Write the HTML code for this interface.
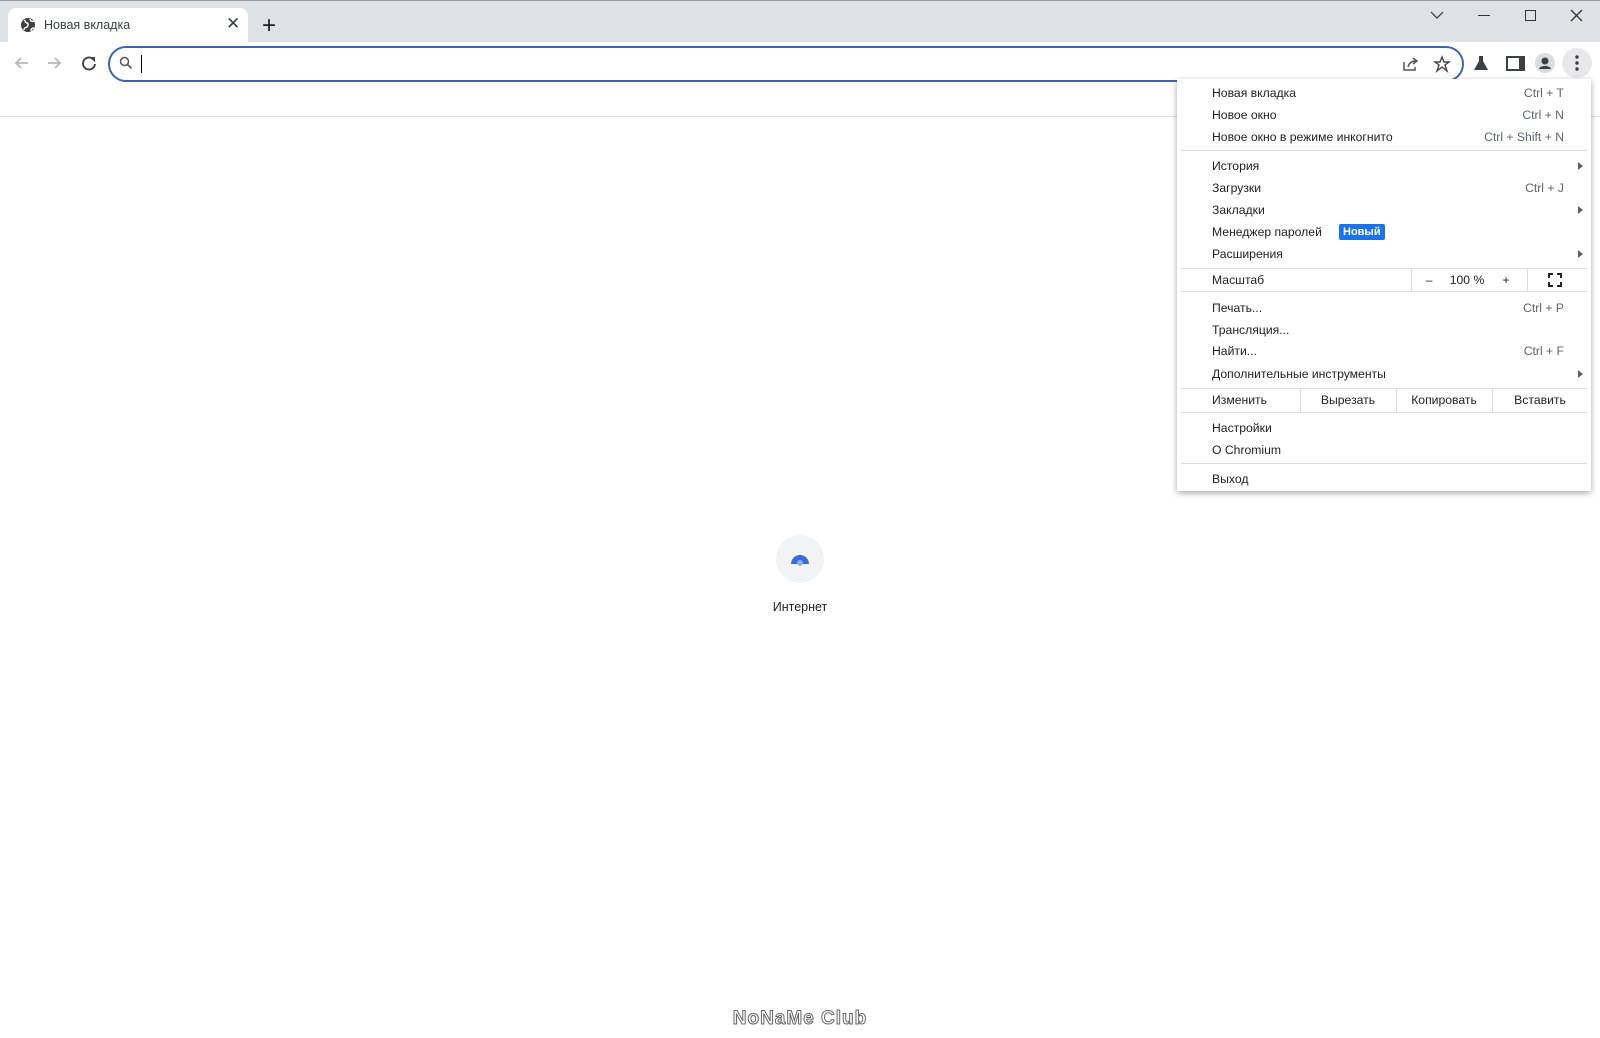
<!DOCTYPE html><html><head><meta charset="utf-8"><style>
body{margin:0;width:1600px;height:1038px;overflow:hidden;background:#fff;font-family:"Liberation Sans",sans-serif;position:relative}
.a{position:absolute}
.strip{left:0;top:0;width:1600px;height:42px;background:#dee1e6;border-top:1px solid #999;box-sizing:border-box}
.tab{left:8px;top:8px;width:240px;height:34px;background:#fff;border-radius:8px 8px 0 0;font-size:12.5px;color:#3c4043}
.tb{left:0;top:42px;width:1600px;height:74px;background:#fff;border-bottom:1px solid #dadce0}
.omni{left:108px;top:46px;width:1352px;height:32px;border:2px solid #3c65b0;border-radius:18px;background:#fff}
.menu{left:1177px;top:79px;width:414px;height:412px;background:#fff;box-shadow:0 2px 6px rgba(0,0,0,.35);font-size:12.2px;color:#202124}
.it{position:absolute;left:35px;transform:translateY(-50%)}
.sc{position:absolute;right:27px;transform:translateY(-50%);color:#5f6368}
.ar{position:absolute;right:8px;width:0;height:0;border-left:5px solid #5f6368;border-top:4px solid transparent;border-bottom:4px solid transparent;transform:translateY(-50%)}
.sep{position:absolute;left:4px;right:4px;height:1px;background:#dadce0}
.vs{position:absolute;width:1px;background:#dadce0}
.c{position:absolute;transform:translate(-50%,-50%)}
</style></head><body>
<div class="a strip"></div>
<div class="a tab"><svg class="a" style="left:12px;top:9px" width="16" height="16" viewBox="0 0 16 16"><circle cx="8" cy="8" r="7" fill="#3c4043"/><path d="M4 3c2 1 1 3 3 3s1 3 0 4-3 0-3 3M10 2c0 2 2 3 4 2M11 14c0-2 1-3 3-3" stroke="#fff" stroke-width="1.4" fill="none"/></svg><span class="a" style="left:36px;top:10px">Новая вкладка</span><span class="a" style="left:218px;top:6px;font-size:17px">✕</span></div>
<span class="a" style="left:262px;top:16px;font-size:24px;color:#202124;line-height:20px">+</span>
<svg class="a" style="left:1430px;top:10px" width="14" height="10"><path d="M1 2l6 6 6-6" stroke="#333" fill="none" stroke-width="1.2"/></svg>
<div class="a" style="left:1478px;top:15px;width:12px;height:1px;background:#333"></div>
<div class="a" style="left:1525px;top:10px;width:9px;height:9px;border:1.3px solid #333"></div>
<svg class="a" style="left:1570px;top:9px" width="13" height="13"><path d="M1 1l11 11M12 1L1 12" stroke="#333" stroke-width="1.3"/></svg>
<div class="a tb"></div>
<svg class="a" style="left:13px;top:55px" width="120" height="16" viewBox="0 0 120 16"><path d="M15 8H3M8 3L3 8l5 5" stroke="#b5b7ba" stroke-width="1.8" fill="none"/><path d="M35 8h12M42 3l5 5-5 5" stroke="#b5b7ba" stroke-width="1.8" fill="none"/><path d="M80 4a6 6 0 1 0 2 5" stroke="#444" stroke-width="1.9" fill="none"/><path d="M76 2h6v5" fill="#444"/></svg>
<div class="a omni"><svg class="a" style="left:9px;top:8px" width="14" height="14"><circle cx="5.5" cy="5.5" r="4" stroke="#555" stroke-width="1.5" fill="none"/><path d="M8.5 8.5l4 4" stroke="#555" stroke-width="1.6"/></svg><div class="a" style="left:31px;top:7px;width:1px;height:18px;background:#000"></div>
<svg class="a" style="left:1291px;top:7px" width="18" height="18"><path d="M3 7v8h11v-3M7 12c1-4 4-6 8-6M12 3l4 3-4 3" stroke="#555" stroke-width="1.5" fill="none"/></svg>
<svg class="a" style="left:1323px;top:7px" width="18" height="18"><path d="M9 2l2 5h5l-4 3 2 6-5-4-5 4 2-6-4-3h5z" stroke="#444" stroke-width="1.4" fill="none"/></svg></div>
<svg class="a" style="left:1472px;top:54px" width="18" height="18"><path d="M6 2h6M7 2v5l-5 9h14l-5-9V2z" fill="#3c4043"/></svg>
<div class="a" style="left:1506px;top:56px;width:11px;height:11px;border:2px solid #3c4043;border-right-width:6px"></div>
<div class="a" style="left:1535px;top:53px;width:20px;height:20px;border-radius:50%;background:#dadce0"><svg width="20" height="20"><circle cx="10" cy="8" r="3.5" fill="#3c4043"/><path d="M4 16c1-4 11-4 12 0z" fill="#3c4043"/></svg></div>
<div class="a" style="left:1562px;top:48px;width:30px;height:30px;border-radius:50%;background:#e8e8ea"><svg width="30" height="30"><circle cx="15" cy="9" r="1.7" fill="#3c4043"/><circle cx="15" cy="15" r="1.7" fill="#3c4043"/><circle cx="15" cy="21" r="1.7" fill="#3c4043"/></svg></div>
<div class="a menu">
<span class="it" style="top:14px">Новая вкладка</span><span class="sc" style="top:14px">Ctrl + T</span>
<span class="it" style="top:36px">Новое окно</span><span class="sc" style="top:36px">Ctrl + N</span>
<span class="it" style="top:58px">Новое окно в режиме инкогнито</span><span class="sc" style="top:58px">Ctrl + Shift + N</span>
<div class="sep" style="top:71px"></div>
<span class="it" style="top:87px">История</span><span class="ar" style="top:87px"></span>
<span class="it" style="top:109px">Загрузки</span><span class="sc" style="top:109px">Ctrl + J</span>
<span class="it" style="top:131px">Закладки</span><span class="ar" style="top:131px"></span>
<span class="it" style="top:153px">Менеджер паролей</span><span class="a" style="left:162px;top:145px;background:#1a73e8;color:#fff;font-weight:bold;font-size:11px;padding:1px 4px;border-radius:2px;line-height:14px">Новый</span>
<span class="it" style="top:175px">Расширения</span><span class="ar" style="top:175px"></span>
<div class="sep" style="top:189px"></div>
<span class="it" style="top:201px">Масштаб</span>
<div class="vs" style="left:234px;top:189px;height:23px"></div><div class="vs" style="left:350px;top:189px;height:23px"></div>
<span class="c" style="left:252px;top:201px">–</span><span class="c" style="left:290px;top:201px">100 %</span><span class="c" style="left:329px;top:201px">+</span>
<svg class="c" style="left:378px;top:201px" width="14" height="14"><path d="M1 5V1h4M9 1h4v4M13 9v4H9M5 13H1V9" stroke="#202124" stroke-width="2" fill="none"/></svg>
<div class="sep" style="top:212px"></div>
<span class="it" style="top:229px">Печать...</span><span class="sc" style="top:229px">Ctrl + P</span>
<span class="it" style="top:251px">Трансляция...</span>
<span class="it" style="top:272px">Найти...</span><span class="sc" style="top:272px">Ctrl + F</span>
<span class="it" style="top:295px">Дополнительные инструменты</span><span class="ar" style="top:295px"></span>
<div class="sep" style="top:309px"></div>
<span class="it" style="top:321px">Изменить</span>
<div class="vs" style="left:123px;top:309px;height:24px"></div><div class="vs" style="left:219px;top:309px;height:24px"></div><div class="vs" style="left:315px;top:309px;height:24px"></div>
<span class="c" style="left:171px;top:321px">Вырезать</span><span class="c" style="left:267px;top:321px">Копировать</span><span class="c" style="left:363px;top:321px">Вставить</span>
<div class="sep" style="top:333px"></div>
<span class="it" style="top:349px">Настройки</span>
<span class="it" style="top:371px">О Chromium</span>
<div class="sep" style="top:384px"></div>
<span class="it" style="top:400px">Выход</span>
</div>
<div class="a" style="left:776px;top:535px;width:48px;height:48px;border-radius:50%;background:#f1f3f4"><svg width="48" height="48"><path d="M15 29a9 9 0 0 1 18 0z" fill="#3b6bd6"/><circle cx="24" cy="28" r="3" fill="#8fb0f0"/></svg></div>
<span class="c" style="left:800px;top:607px;font-size:12.5px;color:#202124">Интернет</span>
<span class="c" style="left:800px;top:1019px;font-size:19px;font-weight:bold;color:#fff;-webkit-text-stroke:1px #666;letter-spacing:1px">NoNaMe Club</span>
</body></html>
